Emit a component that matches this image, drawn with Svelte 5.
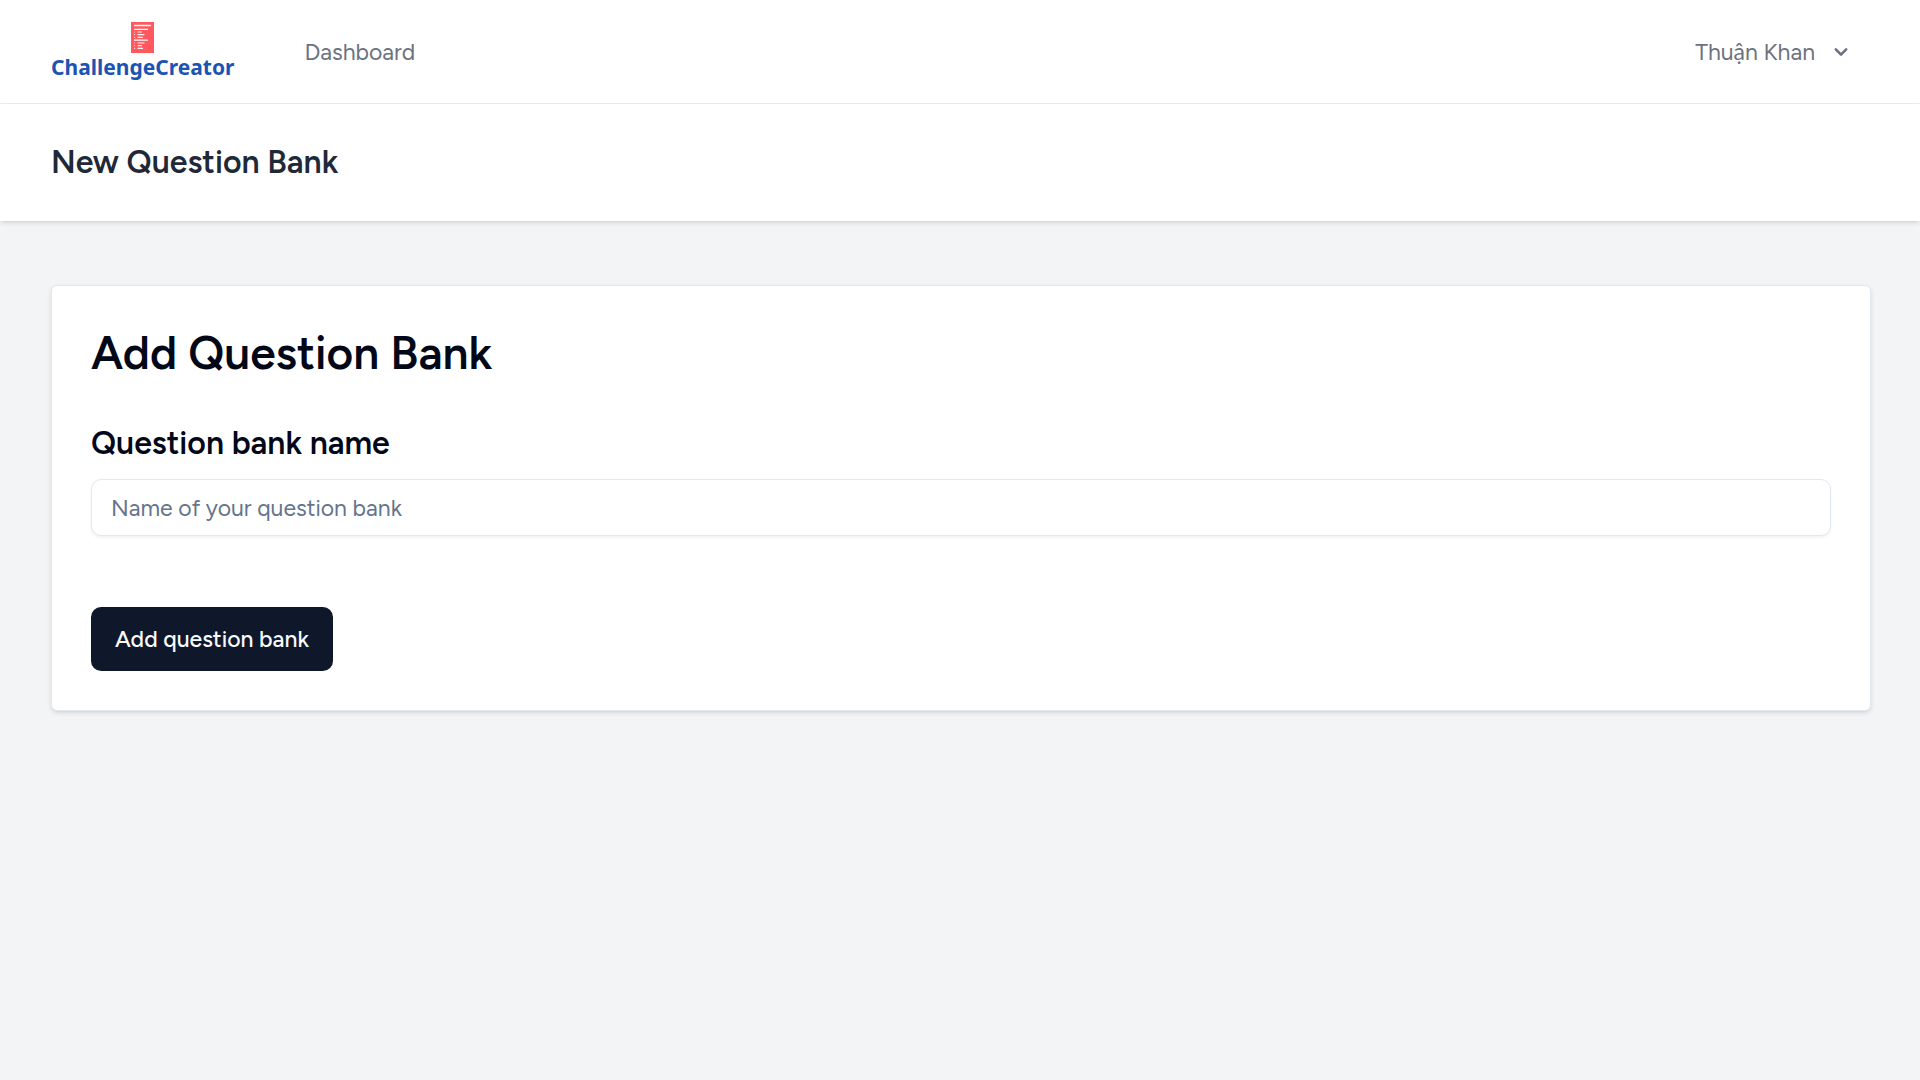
<script>
  let name = $state('');
</script>

<div class="page">
  <nav>
    <a class="logo" href="/" aria-label="ChallengeCreator">
      <svg viewBox="0 0 23 31" width="23" height="31" aria-hidden="true">
        <rect width="23" height="31" fill="#ff585f" />
        <g stroke="#fff" stroke-linecap="round">
          <path d="M3.500 3.500H19.500M3.500 7.300H16.500M3.500 18.200H16.500" stroke-width="1.300" />
          <path d="M7 10H10.500M7 12.600H13M7 15.300H11.500M7 21H13M7 23.600H10.500M7 26.400H11.500" stroke-width="1.200" stroke-opacity=".9" />
          <path d="M3.500 10h.1M3.500 12.600h.1M3.500 15.300h.1M3.500 21h.1M3.500 23.600h.1M3.500 26.400h.1" stroke-width="1.200" stroke-opacity=".8" />
        </g>
      </svg>
      <span>ChallengeCreator</span>
    </a>
    <a class="link" href="/dashboard">Dashboard</a>
    <button class="user" type="button">
      Thuận Khan
      <svg viewBox="0 0 20 20" width="26" height="26" fill="currentColor" aria-hidden="true">
        <path fill-rule="evenodd" clip-rule="evenodd" d="M5.293 7.293a1 1 0 011.414 0L10 10.586l3.293-3.293a1 1 0 111.414 1.414l-4 4a1 1 0 01-1.414 0l-4-4a1 1 0 010-1.414z" />
      </svg>
    </button>
  </nav>

  <header>
    <h2>New Question Bank</h2>
  </header>

  <main>
    <form class="card" onsubmit={(e) => e.preventDefault()}>
      <h1>Add Question Bank</h1>
      <label for="bank-name">Question bank name</label>
      <input id="bank-name" type="text" placeholder="Name of your question bank" bind:value={name} />
      <button class="submit" type="submit">Add question bank</button>
    </form>
  </main>
</div>

<style>
  :global(body) {
    background: #f3f4f6;
  }
  .page {
    min-height: 100vh;
    font-family: Figtree, Lato, "Noto Sans", sans-serif;
    font-size: 23px;
    line-height: 32px;
    color: #020817;
  }
  .page :global(*) {
    box-sizing: border-box;
  }
  nav {
    display: flex;
    align-items: center;
    min-height: 104px;
    padding: 0 66px 0 51px;
    background: #fff;
    border-bottom: 1px solid #edeef1;
  }
  .logo {
    display: flex;
    flex-direction: column;
    align-items: center;
    color: #1c54b2;
    font-family: "Noto Sans", sans-serif;
    font-size: 21px;
    font-weight: 700;
    line-height: 28px;
    text-decoration: none;
  }
  .link {
    margin-left: 70px;
    color: #6b7280;
    text-decoration: none;
  }
  .user {
    display: flex;
    align-items: center;
    gap: 13px;
    margin-left: auto;
    padding: 0;
    border: 0;
    background: none;
    color: #6b7280;
    font: inherit;
    cursor: pointer;
  }
  header {
    position: relative;
    padding: 38px 51px 39px;
    background: #fff;
    box-shadow: 0 2px 5px rgb(0 0 0 / 0.1), 0 2px 3px -2px rgb(0 0 0 / 0.1);
  }
  h1,
  h2 {
    margin: 0;
  }
  h2 {
    color: #1f2937;
    font-size: 32px;
    font-weight: 600;
    line-height: 40px;
  }
  main {
    padding: 64px 49px 64px 51px;
  }
  .card {
    display: flex;
    flex-direction: column;
    align-items: flex-start;
    padding: 39px;
    background: #fff;
    border: 1px solid #e2e8f0;
    border-radius: 6px;
    box-shadow: 0 2px 5px rgb(0 0 0 / 0.1), 0 2px 3px -2px rgb(0 0 0 / 0.1);
  }
  h1 {
    font-size: 46px;
    font-weight: 600;
    line-height: 56px;
  }
  label {
    margin: 42px 0 16px;
    font-size: 32px;
    font-weight: 600;
    line-height: 40px;
  }
  input {
    width: 100%;
    height: 57px;
    padding: 5px 19px;
    border: 1px solid #e2e8f0;
    border-radius: 10px;
    background: #fff;
    box-shadow: 0 2px 3px rgb(0 0 0 / 0.05);
    color: inherit;
    font: inherit;
  }
  input::placeholder {
    color: #64748b;
    opacity: 1;
  }
  .submit {
    height: 64px;
    margin-top: 71px;
    padding: 0 24px;
    border: 0;
    border-radius: 10px;
    background: #0f172a;
    color: #f8fafc;
    font: inherit;
    font-weight: 500;
    cursor: pointer;
  }
</style>
